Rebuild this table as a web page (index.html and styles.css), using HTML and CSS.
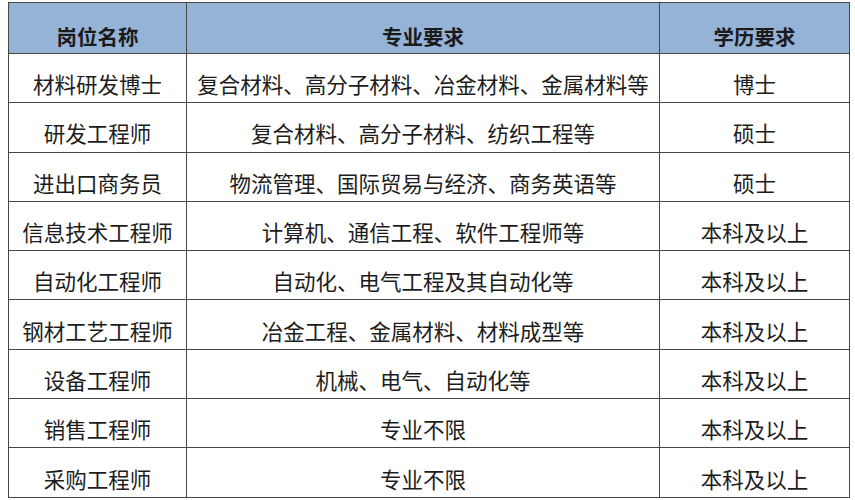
FILE: index.html
```html
<!DOCTYPE html>
<html lang="zh-CN">
<head>
<meta charset="utf-8">
<title>岗位需求</title>
<link rel="stylesheet" href="styles.css">
</head>
<body>
<table class="jobs">
  <colgroup>
    <col class="c-name">
    <col class="c-major">
    <col class="c-edu">
  </colgroup>
  <thead>
    <tr class="head-row">
      <th>岗位名称</th>
      <th>专业要求</th>
      <th>学历要求</th>
    </tr>
  </thead>
  <tbody>
    <tr><td>材料研发博士</td><td>复合材料、高分子材料、冶金材料、金属材料等</td><td>博士</td></tr>
    <tr><td>研发工程师</td><td>复合材料、高分子材料、纺织工程等</td><td>硕士</td></tr>
    <tr><td>进出口商务员</td><td>物流管理、国际贸易与经济、商务英语等</td><td>硕士</td></tr>
    <tr><td>信息技术工程师</td><td>计算机、通信工程、软件工程师等</td><td>本科及以上</td></tr>
    <tr><td>自动化工程师</td><td>自动化、电气工程及其自动化等</td><td>本科及以上</td></tr>
    <tr><td>钢材工艺工程师</td><td>冶金工程、金属材料、材料成型等</td><td>本科及以上</td></tr>
    <tr><td>设备工程师</td><td>机械、电气、自动化等</td><td>本科及以上</td></tr>
    <tr><td>销售工程师</td><td>专业不限</td><td>本科及以上</td></tr>
    <tr><td>采购工程师</td><td>专业不限</td><td>本科及以上</td></tr>
  </tbody>
</table>
</body>
</html>
```
FILE: styles.css
```css
html, body {
  background: #ffffff;
}
body {
  margin: 2px 0 0 8px;
  font-family: "Noto Sans CJK SC", "Noto Sans", sans-serif;
  color: #1c1c1c;
}
.jobs {
  border-collapse: collapse;
  table-layout: fixed;
  width: 841px;
}
.c-name { width: 178px; }
.c-major { width: 473px; }
.c-edu { width: 190px; }
.jobs th,
.jobs td {
  border: 1px solid #474747;
  text-align: center;
  vertical-align: middle;
  line-height: 22px;
  padding: 0;
  white-space: nowrap;
}
.head-row th {
  height: 51px;
  box-sizing: border-box;
  padding-top: 15px;
  background: #95b3d7;
  font-size: 20.5px;
  font-weight: 700;
  color: #1a1a1a;
}
.jobs td {
  height: 49.3px;
  box-sizing: border-box;
  padding-top: 12px;
  font-size: 21.5px;
  font-weight: 400;
}
```
